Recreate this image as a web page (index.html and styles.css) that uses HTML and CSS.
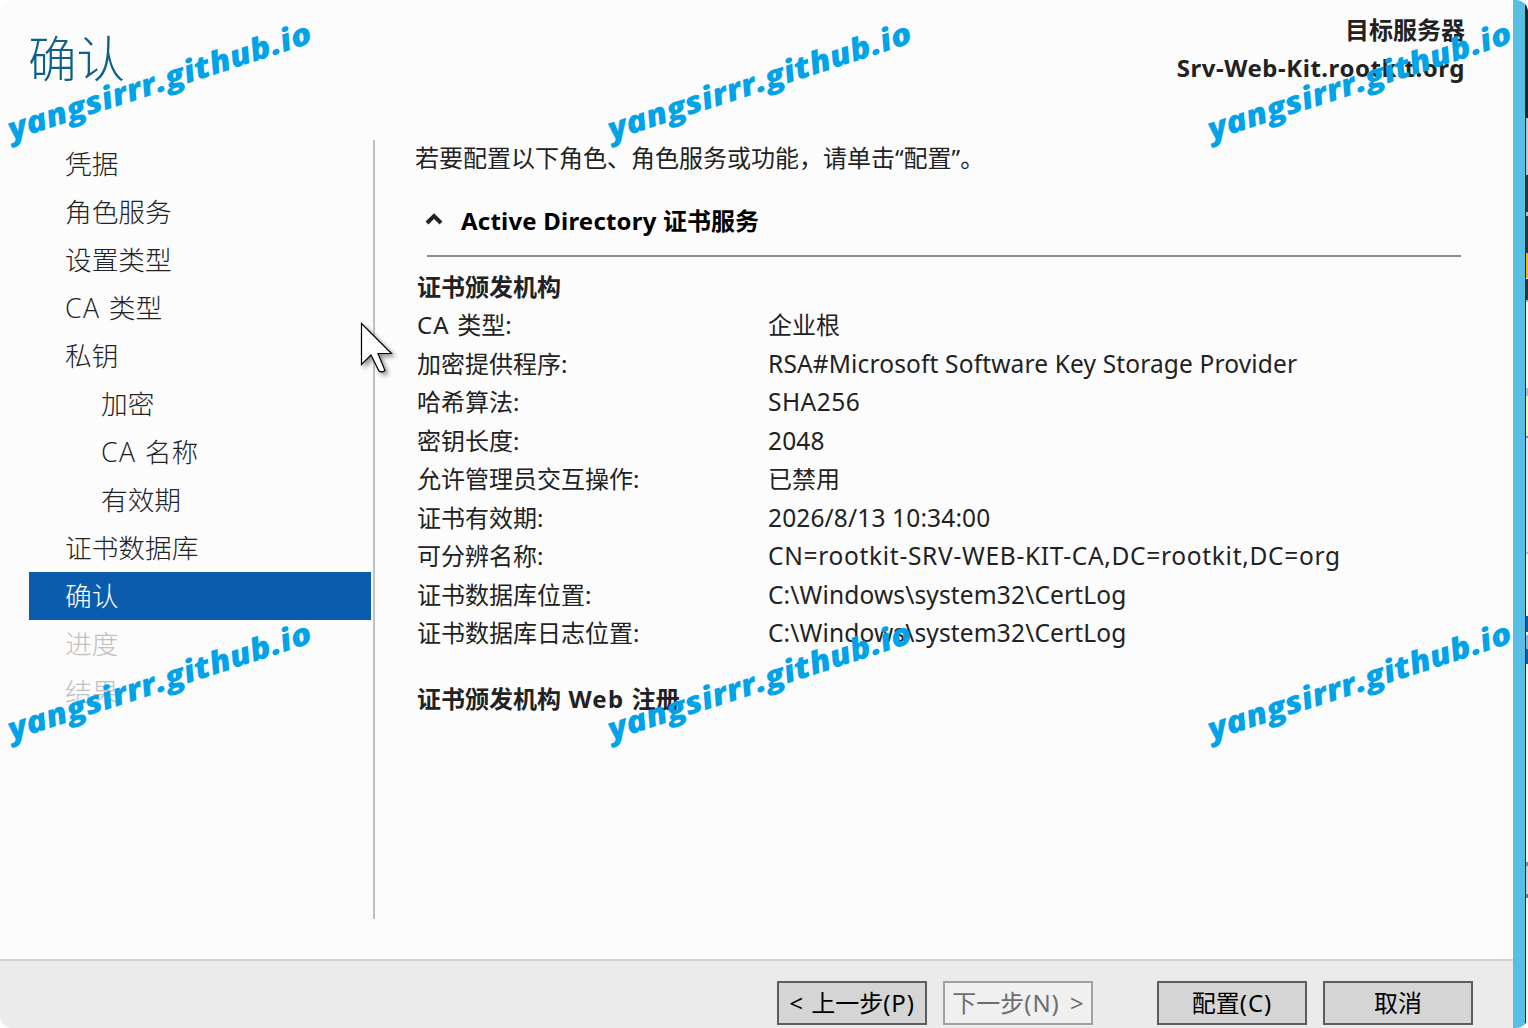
FILE: index.html
```html
<!DOCTYPE html>
<html lang="zh-CN">
<head>
<meta charset="utf-8">
<title>AD CS 配置</title>
<link rel="stylesheet" href="styles.css">
</head>
<body>
<div class="screen">
  <div class="wizard">
    <header class="header">
      <h1 class="title">确认</h1>
      <div class="target">
        <div>目标服务器</div>
        <div class="host">Srv-Web-Kit.rootkit.org</div>
      </div>
    </header>
    <div class="body">
      <nav class="steps">
        <div class="step">凭据</div>
        <div class="step">角色服务</div>
        <div class="step">设置类型</div>
        <div class="step"><span class="ca">CA </span>类型</div>
        <div class="step">私钥</div>
        <div class="step sub">加密</div>
        <div class="step sub"><span class="ca">CA </span>名称</div>
        <div class="step sub">有效期</div>
        <div class="step">证书数据库</div>
        <div class="step active">确认</div>
        <div class="step disabled">进度</div>
        <div class="step disabled">结果</div>
      </nav>
      <main class="content">
        <p class="intro">若要配置以下角色、角色服务或功能，请单击“配置”。</p>
        <div class="group">
          <svg class="chevron" width="18" height="14" viewBox="0 0 18 14"><path d="M2 11 L9 4 L16 11" fill="none" stroke="#222" stroke-width="4"/></svg>
          <span><span class="ad">Active Directory </span>证书服务</span>
        </div>
        <h2 class="section">证书颁发机构</h2>
        <dl class="details">
          <dt><span class="ca">CA </span>类型:</dt><dd>企业根</dd>
          <dt>加密提供程序:</dt><dd class="latin">RSA#Microsoft Software Key Storage Provider</dd>
          <dt>哈希算法:</dt><dd class="latin hash">SHA256</dd>
          <dt>密钥长度:</dt><dd class="latin">2048</dd>
          <dt>允许管理员交互操作:</dt><dd>已禁用</dd>
          <dt>证书有效期:</dt><dd class="latin">2026/8/13 10:34:00</dd>
          <dt>可分辨名称:</dt><dd class="latin dn">CN=rootkit-SRV-WEB-KIT-CA,DC=rootkit,DC=org</dd>
          <dt>证书数据库位置:</dt><dd class="latin">C:\Windows\system32\CertLog</dd>
          <dt>证书数据库日志位置:</dt><dd class="latin">C:\Windows\system32\CertLog</dd>
        </dl>
        <h2 class="section web">证书颁发机构<span class="ca"> Web </span>注册</h2>
      </main>
    </div>
    <footer class="footer">
      <button class="btn">&lt; 上一步<span class="key">(P)</span></button>
      <button class="btn" disabled>下一步<span class="key">(N)</span> &gt;</button>
      <button class="btn configure">配置<span class="key">(C)</span></button>
      <button class="btn">取消</button>
    </footer>
  </div>
  <div class="frame"></div>
  <div class="behind"></div>
  <svg class="cursor" width="40" height="60" viewBox="0 0 40 60"><path d="M1.500 1.500 V42.500 L11 33 L19 49 Q22 51 25 48.500 L18 31.500 H31.500 Z" fill="#fff" stroke="#000" stroke-width="1.200"/></svg>
  <div class="mark c1 r1">yangsirrr.github.io</div>
  <div class="mark c2 r1">yangsirrr.github.io</div>
  <div class="mark c3 r1">yangsirrr.github.io</div>
  <div class="mark c1 r2">yangsirrr.github.io</div>
  <div class="mark c2 r2">yangsirrr.github.io</div>
  <div class="mark c3 r2">yangsirrr.github.io</div>
</div>
</body>
</html>
```

FILE: styles.css
```css
* { box-sizing: border-box; }
body { margin: 0; background: #fff; }
h1, h2, p, dl, dd { margin: 0; }
.screen {
  position: relative;
  display: flex;
  width: 1528px;
  height: 1028px;
  overflow: hidden;
  border-radius: 12px;
  font-family: "Noto Sans", "Noto Sans CJK SC", sans-serif;
  font-size: 24px;
  color: #222;
}
.wizard { display: flex; flex-direction: column; width: 1513px; background: #fcfcfc; }
.frame { width: 12px; background: #57bee4; }
.behind {
  width: 3px;
  border-left: 1px solid #1c2730;
  background: linear-gradient(#222 0 118px, #b5c7d3 118px 175px, #333 175px 212px, #bbb 212px 216px, #333 216px 253px, #ffae00 253px 278px, #fff 278px 279px, #333 279px 300px, #bbb 300px 302px, #fcfcfc 302px 388px, #bbb 388px 396px, #fff9b0 396px 436px, #888 436px 438px, #e6e6e6 438px 552px, #bbb 552px 554px, #fcfcfc 554px 616px, #0b5cad 616px 632px, #fff 632px 635px, #7fb0dd 635px 649px, #0b5cad 649px 664px, #fcfcfc 664px 862px, #888 862px 866px, #d2d2d2 866px 894px, #777 894px 898px, #fcfcfc 898px);
}
.header { display: flex; justify-content: space-between; height: 140px; padding: 11px 48px 0 28px; }
.title { padding-top: 12px; font-size: 48.500px; line-height: 70px; font-weight: 300; color: #0f6088; }
.target { font-weight: 700; text-align: right; line-height: 38px; }
.host { letter-spacing: .530px; }
.body { display: flex; height: 819px; }
.steps { width: 375px; height: 779px; padding: 0 2px 0 29px; border-right: 2px solid #c0c0c0; }
.step { height: 48px; padding-left: 36px; font-family: "Open Sans", "Noto Sans CJK SC", sans-serif; font-size: 26.700px; line-height: 48px; font-weight: 300; }
.ca { letter-spacing: 1.200px; }
.step .ca { letter-spacing: 1.400px; }
.sub { padding-left: 72px; }
.active { color: #fff; background: #0b5cad; }
.disabled { color: #c0c0c0; }
.content { width: 1086px; padding: 0 0 0 40px; }
.intro { height: 61px; line-height: 36px; }
.group { display: flex; align-items: center; height: 56px; margin-left: 12px; padding-bottom: 18px; border-bottom: 2px solid #8c8c8c; font-weight: 700; color: #000; }
.chevron { margin-right: 18px; margin-left: -2px; }
.ad { letter-spacing: .200px; }
.section { padding-left: 2px; margin-top: 11px; font-size: 24px; line-height: 38px; font-weight: 700; }
.details { display: grid; grid-template-columns: 351px 1fr; grid-auto-rows: 38.500px; padding-left: 2px; line-height: 38px; white-space: nowrap; }
.latin { font-size: 24.500px; line-height: 37px; letter-spacing: .140px; }
.hash { letter-spacing: .500px; }
.dn { letter-spacing: .690px; }
.web { margin-top: 27px; }
.footer { display: flex; gap: 16px; height: 69px; padding: 20px 0 0 777px; border-top: 2px solid #d2d2d2; background: #ebebeb; }
.btn { width: 150px; height: 44px; padding: 0; border: 2px solid #5c5d5f; background: #d5d5d5; font: inherit; line-height: 40px; color: #000; white-space: nowrap; word-spacing: 2px; }
.btn:disabled { border-color: #9da2a8; background: #f0f0f0; color: #6d6d6d; word-spacing: 4px; }
.key { letter-spacing: .900px; }
.configure { margin-left: 48px; }
.cursor { position: absolute; left: 360px; top: 322px; filter: drop-shadow(3px 3px 2px rgba(0, 0, 0, .4)); }
.mark {
  position: absolute;
  width: 340px;
  text-align: center;
  font-family: "Open Sans", sans-serif;
  font-size: 31px;
  line-height: 44px;
  font-style: italic;
  font-weight: 800;
  white-space: nowrap;
  color: #00a2e8;
  transform: rotate(-18deg) scaleX(1.11);
}
.c1 { left: -11px; }
.c2 { left: 589px; }
.c3 { left: 1189px; }
.r1 { top: 58px; }
.r2 { top: 658px; }
```
